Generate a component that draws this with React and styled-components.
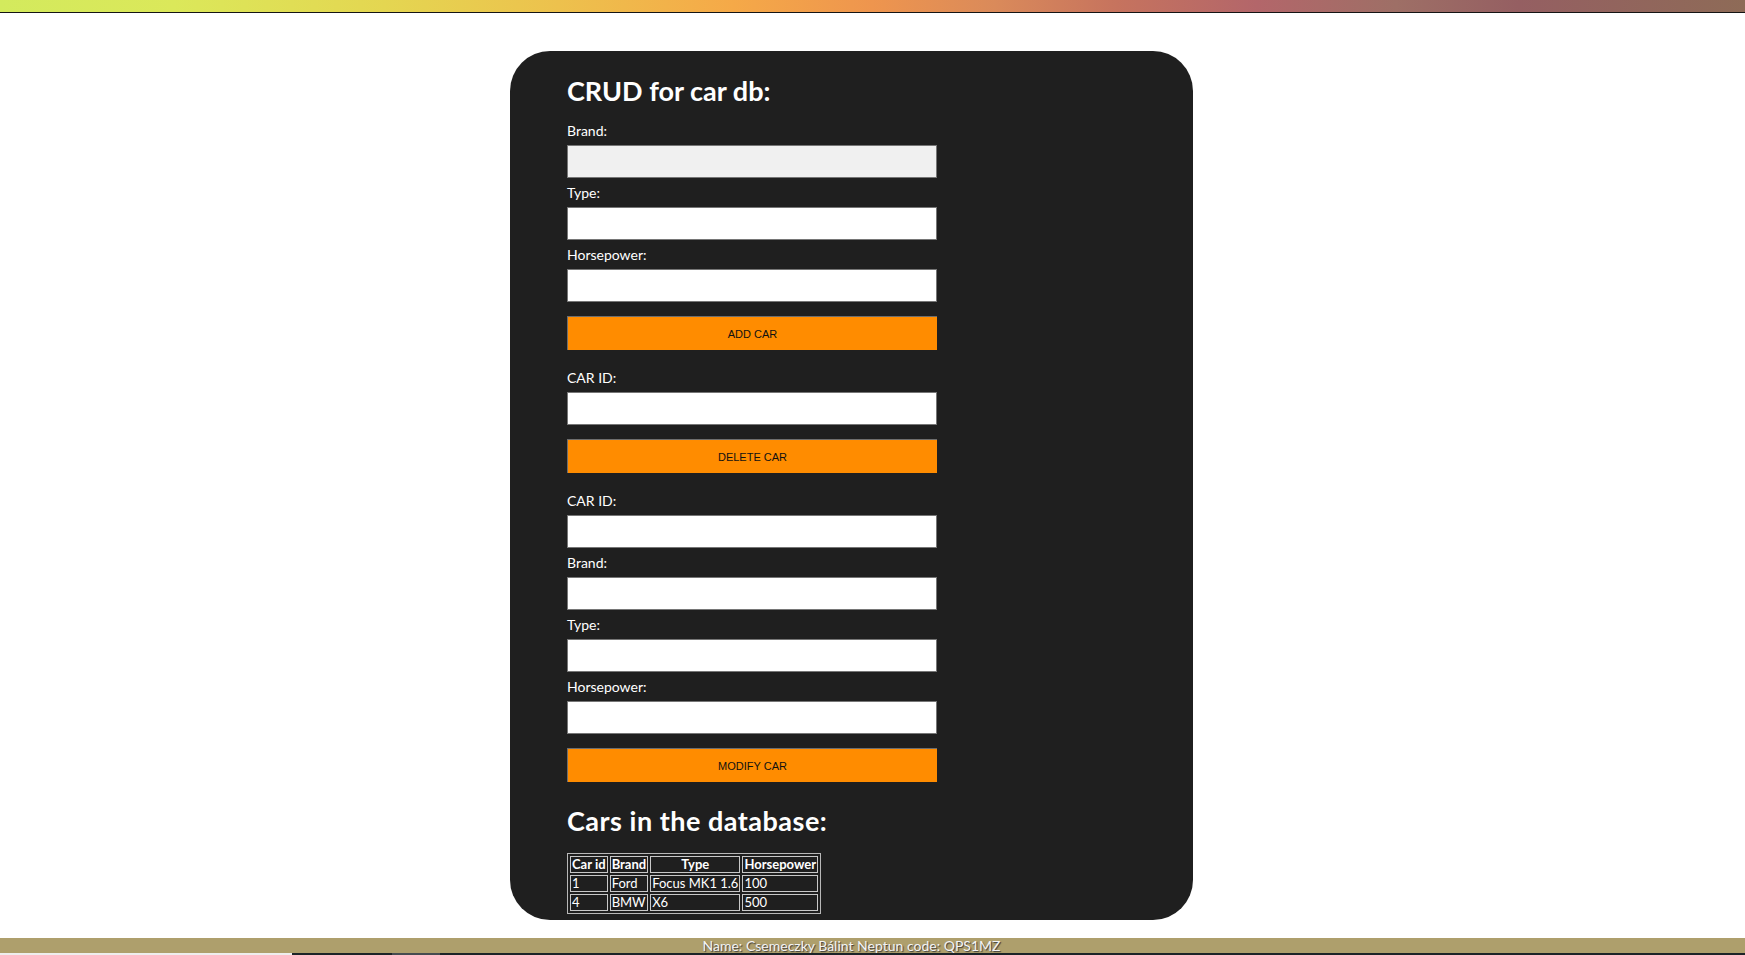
import React from "react";
import styled, { createGlobalStyle } from "styled-components";

const GlobalStyle = createGlobalStyle`
  html, body {
    margin: 0;
    padding: 0;
    background: #ffffff;
    font-family: Lato, "Noto Sans", sans-serif;
  }
  * {
    box-sizing: border-box;
  }
`;

const Page = styled.div`
  min-height: 955px;
  display: flex;
  flex-direction: column;
`;

const TopBar = styled.div`
  height: 13px;
  border-bottom: 1px solid #141414;
  background: linear-gradient(
    90deg,
    #d3ea5d 0%,
    #dbe85a 10%,
    #e4d651 22%,
    #edc14d 32%,
    #f5a948 42%,
    #ee954e 50%,
    #da8a5a 57%,
    #c6735e 64%,
    #b3666a 72%,
    #9e6f66 80%,
    #955f62 87%,
    #8e6b57 100%
  );
`;

const Main = styled.main`
  display: flex;
  justify-content: center;
  padding: 38px 42px 0 0;
`;

const Panel = styled.section`
  width: 683px;
  background: #1f1f1f;
  border-radius: 40px;
  padding: 24px 57px 6px;
  color: #ffffff;
`;

const Heading = styled.h2`
  margin: ${(props) => (props.second ? "23px 0 16px" : "0 0 15px")};
  font-size: 27px;
  line-height: 32px;
  font-weight: 700;
  letter-spacing: ${(props) => (props.second ? "0.5px" : "0")};
  color: #ffffff;
`;

const Form = styled.div`
  display: flex;
  flex-direction: column;
  width: 370px;
`;

const Label = styled.label`
  display: block;
  font-size: 14px;
  line-height: 17px;
  margin-bottom: 6px;
  color: #ffffff;
`;

const Input = styled.input`
  display: block;
  width: 370px;
  height: 33px;
  margin: 0 0 6px;
  padding: 0 6px;
  border: 1px solid #767676;
  background: ${(props) => (props.focused ? "#f0f0f0" : "#ffffff")};
  font-family: "Liberation Sans", Arial, sans-serif;
  font-size: 13px;
  outline: none;
`;

const Button = styled.button`
  display: block;
  width: 370px;
  height: 34px;
  margin: 8px 0 ${(props) => (props.last ? "0" : "19px")};
  padding: 0;
  border: none;
  border-top: 1px solid #6e6e6e;
  border-left: 1px solid #6e6e6e;
  background: #ff8c00;
  color: #111111;
  font-family: "Liberation Sans", Arial, sans-serif;
  font-size: 11px;
  text-transform: uppercase;
  cursor: pointer;
`;

const Table = styled.table`
  border: 1px solid #b8b8b8;
  border-spacing: 2px;
  font-size: 13px;
  line-height: 15px;
  color: #ffffff;
`;

const Th = styled.th`
  border: 1px solid #c8c8c8;
  padding: 0 1px;
  font-weight: 700;
  text-align: center;
`;

const Td = styled.td`
  border: 1px solid #c8c8c8;
  padding: 0 1px;
  text-align: left;
`;

const Footer = styled.footer`
  margin-top: 18px;
`;

const FooterBar = styled.div`
  height: 15px;
  background: #ae9f6c;
  padding-right: 42px;
  text-align: center;
  font-size: 14px;
  line-height: 15px;
  color: #f4f4f4;
  text-shadow: 1px 1px 1px #3a3a3a;
`;

const Strip = styled.div`
  height: 3px;
  display: flex;
`;

const StripPart = styled.div`
  width: ${(props) => props.w || "auto"};
  flex: ${(props) => (props.w ? "none" : "1")};
  background: ${(props) => props.color};
`;

const cars = [
  { id: 1, brand: "Ford", type: "Focus MK1 1.6", hp: 100 },
  { id: 4, brand: "BMW", type: "X6", hp: 500 },
];

const Field = ({ label, focused }) => (
  <>
    <Label>{label}</Label>
    <Input type="text" focused={focused} />
  </>
);

export default function App() {
  return (
    <>
      <GlobalStyle />
      <Page>
        <TopBar />
        <Main>
          <Panel>
            <Heading>CRUD for car db:</Heading>
            <Form>
              <Field label="Brand:" focused />
              <Field label="Type:" />
              <Field label="Horsepower:" />
              <Button>Add car</Button>

              <Field label="CAR ID:" />
              <Button>Delete car</Button>

              <Field label="CAR ID:" />
              <Field label="Brand:" />
              <Field label="Type:" />
              <Field label="Horsepower:" />
              <Button last>Modify car</Button>
            </Form>

            <Heading second>Cars in the database:</Heading>
            <Table>
              <thead>
                <tr>
                  <Th>Car id</Th>
                  <Th>Brand</Th>
                  <Th>Type</Th>
                  <Th>Horsepower</Th>
                </tr>
              </thead>
              <tbody>
                {cars.map((car) => (
                  <tr key={car.id}>
                    <Td>{car.id}</Td>
                    <Td>{car.brand}</Td>
                    <Td>{car.type}</Td>
                    <Td>{car.hp}</Td>
                  </tr>
                ))}
              </tbody>
            </Table>
          </Panel>
        </Main>
        <Footer>
          <FooterBar>Name: Csemeczky Bálint Neptun code: QPS1MZ</FooterBar>
          <Strip>
            <StripPart w="292px" color="#eeeeee" />
            <StripPart w="100px" color="#1c2428" />
            <StripPart w="48px" color="#464c50" />
            <StripPart color="#1c2428" />
          </Strip>
        </Footer>
      </Page>
    </>
  );
}
